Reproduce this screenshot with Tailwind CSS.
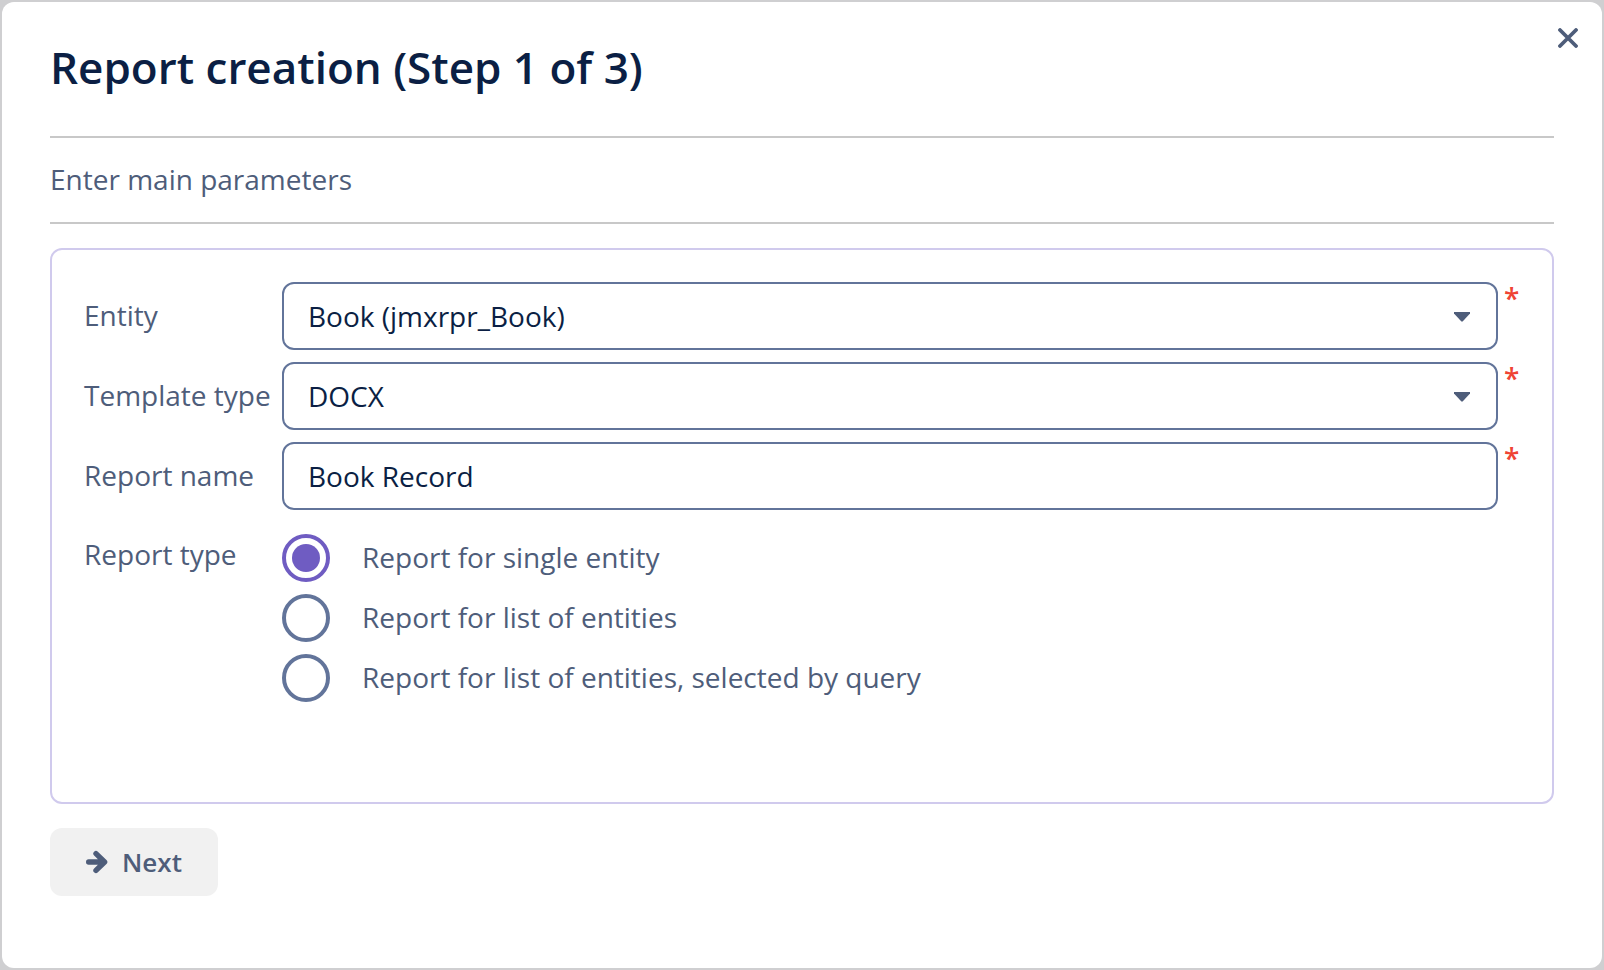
<!DOCTYPE html>
<html lang="en">
<head>
<meta charset="utf-8">
<title>Report creation</title>
<script src="https://cdn.jsdelivr.net/npm/@tailwindcss/browser@4"></script>
</head>
<body class="flex min-h-screen bg-[#cfcfd1] p-0.5 font-['Open_Sans',sans-serif] text-[28px] leading-9 text-[#4e5d7a]">
<main role="dialog" aria-labelledby="title" class="relative flex flex-1 flex-col rounded-xl bg-white px-12 pb-[72px]">
  <button type="button" aria-label="Close" class="absolute top-4 right-3.5 flex size-10 items-center justify-center">
    <svg class="size-5" viewBox="0 0 20 20" fill="none" stroke="currentColor" stroke-width="3.8" stroke-linecap="round"><path d="M2 2 18 18M18 2 2 18"/></svg>
  </button>
  <header class="border-b-2 border-[#c8c8c8] pt-9 pb-10">
    <h1 id="title" class="text-[44px] leading-[58px] font-semibold text-[#0b1f44]">Report creation (Step 1 of 3)</h1>
  </header>
  <p class="border-b-2 border-[#c8c8c8] pt-[23px] pb-[25px]">Enter main parameters</p>

  <form id="report" class="mt-6 grid flex-1 grid-cols-[198px_1fr_22px] content-start gap-y-3 rounded-xl border-2 border-[#d0caed] p-8">
    <label for="entity" class="self-center pb-0.5">Entity</label>
    <div class="relative">
      <select id="entity" class="block h-[68px] w-full appearance-none rounded-xl border-2 border-[#62749a] bg-white px-6 text-[#0b1f44]"><option>Book (jmxrpr_Book)</option></select>
      <svg class="pointer-events-none absolute top-[30px] right-7 h-2.5 w-4" viewBox="0 0 16 10" fill="currentColor"><path d="M0 0h16v1.5L8.6 9.4h-1.2L0 1.5z"/></svg>
    </div>
    <span aria-hidden="true" class="pl-1.5 leading-8 font-semibold text-[#ef4434]">*</span>

    <label for="template" class="self-center pb-0.5">Template type</label>
    <div class="relative">
      <select id="template" class="block h-[68px] w-full appearance-none rounded-xl border-2 border-[#62749a] bg-white px-6 text-[#0b1f44]"><option>DOCX</option></select>
      <svg class="pointer-events-none absolute top-[30px] right-7 h-2.5 w-4" viewBox="0 0 16 10" fill="currentColor"><path d="M0 0h16v1.5L8.6 9.4h-1.2L0 1.5z"/></svg>
    </div>
    <span aria-hidden="true" class="pl-1.5 leading-8 font-semibold text-[#ef4434]">*</span>

    <label for="name" class="self-center pb-0.5">Report name</label>
    <input id="name" type="text" value="Book Record" class="h-[68px] w-full rounded-xl border-2 border-[#62749a] bg-white px-6 text-[#0b1f44]">
    <span aria-hidden="true" class="pl-1.5 leading-8 font-semibold text-[#ef4434]">*</span>

    <span id="type-label" class="pt-3.5">Report type</span>
    <div role="radiogroup" aria-labelledby="type-label" class="flex flex-col items-start gap-3 pt-3">
      <label class="flex items-center gap-8"><input type="radio" name="type" checked class="size-12 appearance-none rounded-full border-4 border-[#62749a] bg-clip-content p-1.5 checked:border-[#6f5cc2] checked:bg-[#6f5cc2]"><span class="pb-0.5">Report for single entity</span></label>
      <label class="flex items-center gap-8"><input type="radio" name="type" class="size-12 appearance-none rounded-full border-4 border-[#62749a] bg-clip-content p-1.5 checked:border-[#6f5cc2] checked:bg-[#6f5cc2]"><span class="pb-0.5">Report for list of entities</span></label>
      <label class="flex items-center gap-8"><input type="radio" name="type" class="size-12 appearance-none rounded-full border-4 border-[#62749a] bg-clip-content p-1.5 checked:border-[#6f5cc2] checked:bg-[#6f5cc2]"><span class="pb-0.5">Report for list of entities, selected by query</span></label>
    </div>
  </form>

  <button type="submit" form="report" class="mt-6 flex items-center gap-3.5 self-start rounded-xl bg-[#f1f1f1] px-9 py-4 text-[26px] font-semibold">
    <svg class="h-6 w-[22px]" viewBox="0 0 22 24" fill="none" stroke="currentColor" stroke-width="5.4" stroke-linecap="round" stroke-linejoin="round"><path d="M2.7 12H17M10 3.6 18.6 12 10 20.4"/></svg>
    Next
  </button>
</main>
</body>
</html>
